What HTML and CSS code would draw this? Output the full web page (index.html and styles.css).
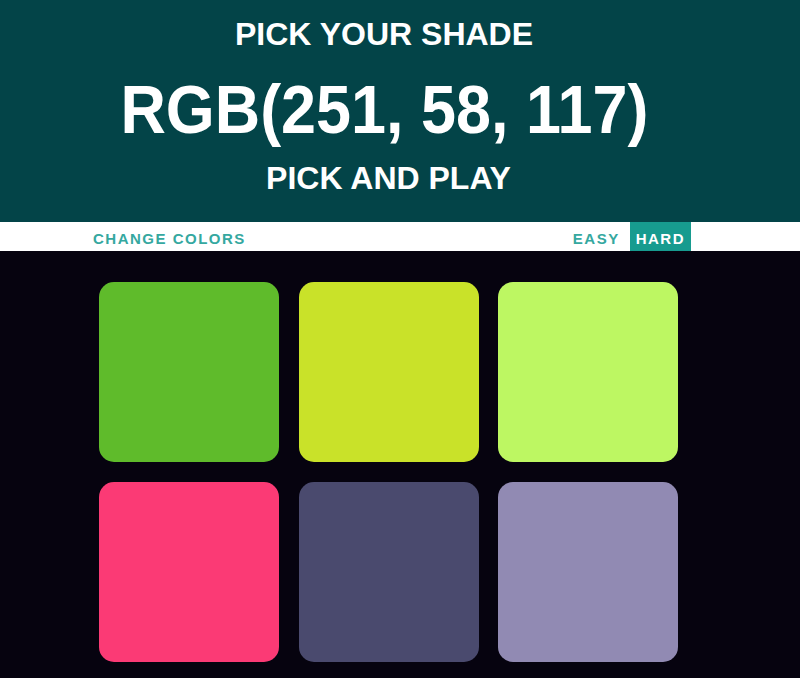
FILE: index.html
```html
<!DOCTYPE html>
<html lang="en">
<head>
<meta charset="utf-8">
<title>Pick Your Shade</title>
<link rel="stylesheet" href="styles.css">
</head>
<body>
  <header class="header">
    <h1 class="title">
      <span class="title-top">PICK YOUR SHADE</span>
      <span class="title-rgb"><span class="rgb-text">RGB(251, 58, 117)</span></span>
      <span class="title-bottom">PICK AND PLAY</span>
    </h1>
  </header>
  <nav class="nav">
    <div class="nav-inner">
      <button class="nav-btn">CHANGE COLORS</button>
      <div class="modes">
        <button class="nav-btn">EASY</button>
        <button class="nav-btn selected">HARD</button>
      </div>
    </div>
  </nav>
  <main class="board">
    <div class="square" style="background: rgb(95, 187, 43);"></div>
    <div class="square" style="background: rgb(201, 226, 41);"></div>
    <div class="square" style="background: rgb(189, 247, 98);"></div>
    <div class="square" style="background: rgb(251, 58, 117);"></div>
    <div class="square" style="background: rgb(74, 74, 110);"></div>
    <div class="square" style="background: rgb(145, 138, 179);"></div>
  </main>
</body>
</html>
```
FILE: styles.css
```css
* { box-sizing: border-box; }

html, body {
  margin: 0;
  padding: 0;
  height: 100%;
}

body {
  background: #06030f;
  font-family: "Liberation Sans", Arial, sans-serif;
  overflow: hidden;
}

.header {
  background: #034448;
  color: #ffffff;
  padding: 16px 32px 26px 0;
  height: 222px;
}

.title {
  margin: 0;
  font-weight: bold;
  text-align: center;
  display: flex;
  flex-direction: column;
  align-items: center;
}

.title-top,
.title-bottom {
  font-size: 32px;
  line-height: 36px;
}

.title-bottom {
  margin-left: 9px;
}

.title-rgb {
  font-size: 68px;
  line-height: 76px;
  margin: 19px 0 13px;
}

.rgb-text {
  display: inline-block;
  transform: scaleX(0.925);
  white-space: nowrap;
}

.nav {
  background: #ffffff;
  height: 29px;
}

.nav-inner {
  width: 604px;
  margin-left: 87px;
  display: flex;
  justify-content: space-between;
  height: 100%;
}

.modes {
  display: flex;
  gap: 4px;
}

.nav-btn {
  border: none;
  background: transparent;
  font-family: "Liberation Sans", Arial, sans-serif;
  font-weight: bold;
  font-size: 15px;
  letter-spacing: 1.5px;
  color: #35a8a0;
  height: 29px;
  padding: 4px 6px 0;
  line-height: 25px;
  margin: 0;
}

.nav-btn.selected {
  background: #179b8f;
  color: #ffffff;
}

.board {
  display: grid;
  grid-template-columns: repeat(3, 180px);
  grid-auto-rows: 180px;
  gap: 19.5px;
  margin: 31px 0 0 99px;
}

.square {
  border-radius: 15px;
}
```
